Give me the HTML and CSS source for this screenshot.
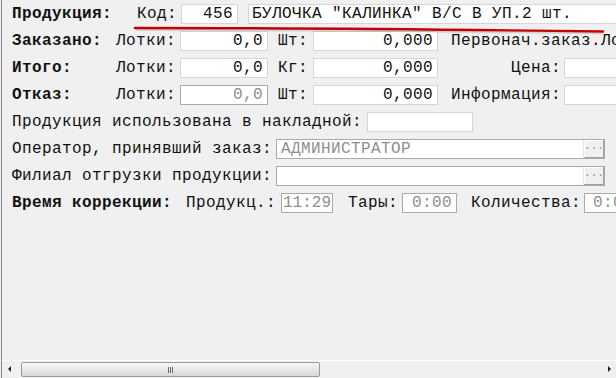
FILE: index.html
```html
<!DOCTYPE html>
<html lang="ru">
<head>
  <meta charset="UTF-8" />
  <meta name="viewport" content="width=device-width, initial-scale=1.0"/>
  <title>Заказ продукции</title>
  <link rel="stylesheet" href="styles.css">
</head>
<body>
  <div class="window">
    <div class="form">

      <div class="row">
        <span class="lbl bold w-head1">Продукция:</span>
        <span class="lbl w-kod">Код:</span>
        <span class="field f-code num">456</span>
        <span class="field f-name">БУЛОЧКА "КАЛИНКА" В/С В УП.2 шт.</span>
      </div>

      <div class="row">
        <span class="lbl bold w-head">Заказано:</span>
        <span class="lbl w-lot">Лотки:</span>
        <span class="field f-lot num">0,0</span>
        <span class="lbl w-sht">Шт:</span>
        <span class="field f-qty num">0,000</span>
        <span class="lbl w-extra">Первонач.заказ.Лотки:</span>
      </div>

      <div class="row">
        <span class="lbl bold w-head">Итого:</span>
        <span class="lbl w-lot">Лотки:</span>
        <span class="field f-lot num">0,0</span>
        <span class="lbl w-sht">Кг:</span>
        <span class="field f-qty num">0,000</span>
        <span class="lbl w-extra right">Цена:</span>
        <span class="field f-tail"></span>
      </div>

      <div class="row">
        <span class="lbl bold w-head">Отказ:</span>
        <span class="lbl w-lot">Лотки:</span>
        <span class="field f-lot num off">0,0</span>
        <span class="lbl w-sht">Шт:</span>
        <span class="field f-qty num">0,000</span>
        <span class="lbl w-extra right">Информация:</span>
        <span class="field f-tail"></span>
      </div>

      <div class="row">
        <span class="lbl w-nakl">Продукция использована в накладной:</span>
        <span class="field f-nakl"></span>
      </div>

      <div class="row">
        <span class="lbl w-long">Оператор, принявший заказ:</span>
        <span class="field f-pick off">АДМИНИСТРАТОР<span class="dots">···</span></span>
      </div>

      <div class="row">
        <span class="lbl w-long">Филиал отгрузки продукции:</span>
        <span class="field f-pick off"><span class="dots">···</span></span>
      </div>

      <div class="row">
        <span class="lbl bold w-time">Время коррекции:</span>
        <span class="lbl w-prod">Продукц.:</span>
        <span class="field f-t1 off">11:29</span>
        <span class="lbl w-tary">Тары:</span>
        <span class="field f-t2 num off">0:00</span>
        <span class="lbl w-kol">Количества:</span>
        <span class="field f-t3 off">0:00</span>
      </div>

    </div>

    <div class="hscroll">
      <span class="arrow left"></span>
      <span class="thumb"><span class="grip"></span></span>
      <span class="arrow right"></span>
    </div>

    <!-- red pen mark under the product name -->
    <svg class="mark" width="616" height="40" viewBox="0 0 616 40">
      <path d="M136 30 Q330 30 603 33.5" stroke="rgba(0,0,0,0.12)" stroke-width="2" fill="none"/>
      <path d="M135 28 Q330 28 603 31.5" stroke="#c40000" stroke-width="2.4" fill="none" stroke-linecap="round"/>
    </svg>
  </div>
</body>
</html>
```

FILE: styles.css
```css
body {
  margin: 0;
  background: #f0f0f0;
  font-family: "Courier New", "Nimbus Mono PS", "FreeMono", "Liberation Mono", monospace;
  font-size: 16px;
  letter-spacing: 0.4px;
  color: #111;
  overflow: hidden;
}
.window {
  position: relative;
  width: 615px;
  height: 378px;
  margin-left: 1px;
  border-left: 1px solid #8a8a8a;
  display: flex;
  flex-direction: column;
  overflow: hidden;
}
.form {
  flex: 1;
  padding: 4px 0 0 10px;
  display: flex;
  flex-direction: column;
  gap: 7px;
}
.row {
  display: flex;
  align-items: center;
  height: 20px;
  white-space: nowrap;
}
.lbl {
  flex: none;
  line-height: 20px;
}
.bold {
  font-weight: bold;
}
.right {
  text-align: right;
}

.w-head1 { width: 125px; }
.w-kod { width: 44px; }
.w-head { width: 104px; }
.w-lot { width: 64px; }
.w-sht { width: 35px; margin-left: 10px; }
.w-extra { width: 110px; margin-left: 13px; }
.w-nakl { width: 355px; }
.w-long { width: 264px; }
.w-time { width: 174px; }
.w-prod { width: 95px; }
.w-tary { width: 54px; margin-left: 15px; }
.w-kol { width: 113px; margin-left: 14px; }

.field {
  flex: none;
  position: relative;
  box-sizing: border-box;
  height: 20px;
  line-height: 18px;
  padding: 0 3px;
  background: #fff;
  border: 1px solid #d6d6d6;
  color: #111;
  overflow: hidden;
}
.num {
  text-align: right;
  padding-right: 4px;
}
.off {
  border-color: #ababab;
  color: #8e8e8e;
}

.f-code { width: 57px; }
.f-name { width: 380px; margin-left: 10px; }
.f-lot { width: 88px; }
.f-qty { width: 125px; }
.f-tail { width: 60px; margin-left: 3px; }
.f-nakl { width: 106px; }
.f-pick { width: 329px; padding-left: 4px; }
.f-t1 { width: 52px; padding: 0 0 0 1px; letter-spacing: 0; }
.f-t2 { width: 55px; }
.f-t3 { width: 40px; padding-left: 8px; }

.dots {
  position: absolute;
  right: 0;
  top: 0;
  width: 21px;
  height: 18px;
  box-sizing: border-box;
  background: #f0f0f0;
  border-left: 1px solid #e4e4e4;
  box-shadow: inset -1px -1px 0 #a0a0a0, inset 1px 1px 0 #ffffff;
  color: #8a8a8a;
  font-size: 11px;
  letter-spacing: 0;
  line-height: 16px;
  text-align: center;
}

.hscroll {
  height: 16px;
  border-top: 1px solid #fbfbfb;
  background: #f0f0f0;
  display: flex;
  align-items: center;
  padding-bottom: 1px;
}
.arrow {
  flex: none;
  width: 0;
  height: 0;
  border-top: 3px solid transparent;
  border-bottom: 3px solid transparent;
}
.arrow.left {
  margin-left: 6px;
  border-right: 3px solid #222;
}
.arrow.right {
  margin-left: auto;
  margin-right: 6px;
  border-left: 3px solid #222;
}
.thumb {
  flex: none;
  position: relative;
  box-sizing: border-box;
  width: 299px;
  height: 15px;
  margin-left: 10px;
  border: 1px solid #9a9a9a;
  border-radius: 2px;
  background: linear-gradient(#f6f6f6, #e8e8e8 50%, #d6d6d6);
}
.grip {
  position: absolute;
  left: 146px;
  top: 4px;
  width: 5px;
  height: 6px;
  background: repeating-linear-gradient(90deg, #6a6a6a 0 1px, transparent 1px 2px);
}
.mark {
  position: absolute;
  left: -2px;
  top: 0;
  pointer-events: none;
}
```
